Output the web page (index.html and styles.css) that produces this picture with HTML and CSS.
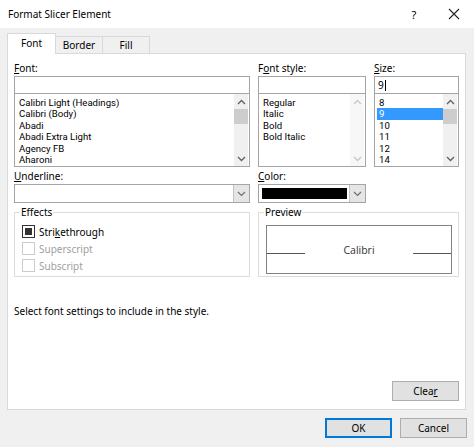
FILE: index.html
```html
<!DOCTYPE html>
<html lang="en">
<head>
  <meta charset="UTF-8">
  <title>Format Slicer Element</title>
  <link rel="stylesheet" href="styles.css">
</head>
<body>
  <div class="dialog">

    <div class="titlebar">
      <span class="title">Format Slicer Element</span>
      <span class="help">?</span>
      <span class="close">
        <svg width="12" height="12" viewBox="0 0 12 12"><path d="M1 1L11 11M11 1L1 11" stroke="#222" stroke-width="1.1" fill="none"/></svg>
      </span>
    </div>

    <div class="tabs">
      <div class="tab active">Font</div>
      <div class="tab">Border</div>
      <div class="tab">Fill</div>
    </div>

    <div class="panel">
      <div class="pickers">
        <!-- Font name -->
        <div class="field">
          <div class="label"><u>F</u>ont:</div>
          <div class="textbox"></div>
          <div class="listbox">
            <ul class="items">
              <li>Calibri Light (Headings)</li>
              <li>Calibri (Body)</li>
              <li>Abadi</li>
              <li>Abadi Extra Light</li>
              <li>Agency FB</li>
              <li>Aharoni</li>
            </ul>
            <div class="scrollbar">
              <svg class="arrow" width="9" height="6" viewBox="0 0 9 6"><polyline points="1,5 4.5,1.5 8,5" stroke="#606060" stroke-width="1.3" fill="none"/></svg>
              <div class="track"><div class="thumb"></div></div>
              <svg class="arrow" width="9" height="6" viewBox="0 0 9 6"><polyline points="1,1 4.5,4.5 8,1" stroke="#606060" stroke-width="1.3" fill="none"/></svg>
            </div>
          </div>
        </div>

        <!-- Font style -->
        <div class="field">
          <div class="label">F<u>o</u>nt style:</div>
          <div class="textbox"></div>
          <div class="listbox">
            <ul class="items">
              <li>Regular</li>
              <li>Italic</li>
              <li>Bold</li>
              <li>Bold Italic</li>
            </ul>
            <div class="scrollbar off">
              <svg class="arrow" width="9" height="6" viewBox="0 0 9 6"><polyline points="1,5 4.5,1.5 8,5" stroke="#c8c8c8" stroke-width="1.3" fill="none"/></svg>
              <div class="track"></div>
              <svg class="arrow" width="9" height="6" viewBox="0 0 9 6"><polyline points="1,1 4.5,4.5 8,1" stroke="#c8c8c8" stroke-width="1.3" fill="none"/></svg>
            </div>
          </div>
        </div>

        <!-- Size -->
        <div class="field">
          <div class="label"><u>S</u>ize:</div>
          <div class="textbox"><span class="typed">9</span><span class="caret"></span></div>
          <div class="listbox">
            <ul class="items">
              <li>8</li>
              <li class="selected">9</li>
              <li>10</li>
              <li>11</li>
              <li>12</li>
              <li>14</li>
            </ul>
            <div class="scrollbar">
              <svg class="arrow" width="9" height="6" viewBox="0 0 9 6"><polyline points="1,5 4.5,1.5 8,5" stroke="#606060" stroke-width="1.3" fill="none"/></svg>
              <div class="track"><div class="thumb"></div></div>
              <svg class="arrow" width="9" height="6" viewBox="0 0 9 6"><polyline points="1,1 4.5,4.5 8,1" stroke="#606060" stroke-width="1.3" fill="none"/></svg>
            </div>
          </div>
        </div>

        <!-- Underline -->
        <div class="field">
          <div class="label spaced"><u>U</u>nderline:</div>
          <div class="combo">
            <div class="combo-value"></div>
            <div class="drop">
              <svg width="9" height="6" viewBox="0 0 9 6"><polyline points="1,1 4.5,4.5 8,1" stroke="#707070" stroke-width="1.2" fill="none"/></svg>
            </div>
          </div>
        </div>

        <!-- Color -->
        <div class="field">
          <div class="label spaced"><u>C</u>olor:</div>
          <div class="combo">
            <div class="combo-value"><div class="swatch"></div></div>
            <div class="drop">
              <svg width="9" height="6" viewBox="0 0 9 6"><polyline points="1,1 4.5,4.5 8,1" stroke="#707070" stroke-width="1.2" fill="none"/></svg>
            </div>
          </div>
        </div>
        <div></div>

        <!-- Effects -->
        <div class="group effects">
          <div class="group-title">Effects</div>
          <div class="check">
            <span class="box mixed"></span>
            <span>Stri<u>k</u>ethrough</span>
          </div>
          <div class="check disabled">
            <span class="box"></span>
            <span>Superscript</span>
          </div>
          <div class="check disabled">
            <span class="box"></span>
            <span>Subscript</span>
          </div>
        </div>

        <!-- Preview -->
        <div class="group preview">
          <div class="group-title">Preview</div>
          <div class="sample">
            <span class="rule"></span>
            <span class="sample-text">Calibri</span>
            <span class="rule"></span>
          </div>
        </div>
      </div>

      <p class="hint">Select font settings to include in the style.</p>

      <div class="clear-row">
        <button class="btn">Clea<u>r</u></button>
      </div>
    </div>

    <div class="actions">
      <button class="btn default">OK</button>
      <button class="btn">Cancel</button>
    </div>

  </div>
</body>
</html>
```

FILE: styles.css
```css
body {
  margin: 0;
  background-color: #f0f0f0;
  font-family: "Noto Sans", sans-serif;
  font-size: 10px;
  color: #000;
}

.dialog {
  width: 474px;
  height: 447px;
  overflow: hidden;
}

/* title bar */
.titlebar {
  height: 28px;
  background-color: #fff;
  display: flex;
  align-items: center;
  padding-left: 8px;
}

.title {
  font-size: 10px;
  flex: 1;
}

.help {
  font-size: 11px;
  width: 40px;
  text-align: center;
}

.close {
  width: 40px;
  display: flex;
  justify-content: center;
}

/* tabs */
.tabs {
  display: flex;
  align-items: flex-end;
  margin: 6px 0 0 7px;
  height: 19px;
  position: relative;
  z-index: 1;
}

.tab {
  width: 46px;
  height: 16px;
  line-height: 16px;
  border: 1px solid #d9d9d9;
  border-bottom: none;
  background-color: #f0f0f0;
  margin-left: -1px;
  text-align: center;
}

.tab.active {
  width: 47px;
  height: 20px;
  line-height: 18px;
  margin-left: 0;
  margin-bottom: -1px;
  background-color: #fff;
}

/* main panel */
.panel {
  margin-left: 7px;
  width: 459px;
  height: 357px;
  border: 1px solid #d9d9d9;
  background-color: #fff;
  display: flex;
  flex-direction: column;
  padding: 7px 6px 0 6px;
  box-sizing: border-box;
}

.pickers {
  display: grid;
  grid-template-columns: 236px 108px 85px;
  column-gap: 8px;
}

.field {
  display: flex;
  flex-direction: column;
}

.label {
  height: 15px;
  line-height: 15px;
}

.label.spaced {
  margin-top: 2px;
}

.textbox {
  height: 18px;
  border: 1px solid #a5a5a5;
  box-sizing: border-box;
  display: flex;
  align-items: center;
  padding-left: 3px;
}

.caret {
  width: 1px;
  height: 11px;
  background-color: #000;
  margin-left: 1px;
}

.listbox {
  height: 73px;
  border: 1px solid #a5a5a5;
  border-top: none;
  box-sizing: border-box;
  display: flex;
}

.items {
  list-style: none;
  margin: 0;
  padding: 3px 0 0 2px;
  flex: 1;
  min-width: 0;
  font-family: Roboto, "Noto Sans", sans-serif;
  font-size: 9.6px;
}

.items li {
  height: 11.4px;
  line-height: 11.4px;
  padding-left: 2px;
  white-space: nowrap;
}

.items li.selected {
  background-color: #3399ff;
  color: #fff;
}

.scrollbar {
  width: 14px;
  background-color: #f0f0f0;
  display: flex;
  flex-direction: column;
  align-items: center;
  padding: 5px 0 4px 0;
  margin-right: 1px;
}

.scrollbar.off {
  background-color: #f7f7f7;
}

.track {
  flex: 1;
  width: 100%;
  padding-top: 4px;
}

.thumb {
  height: 15px;
  background-color: #cdcdcd;
}

/* combos */
.combo {
  height: 19px;
  border: 1px solid #a5a5a5;
  box-sizing: border-box;
  display: flex;
}

.combo-value {
  flex: 1;
  padding: 3px 2px 3px 3px;
}

.swatch {
  height: 11px;
  background-color: #000;
}

.drop {
  width: 15px;
  background-color: #e5e5e5;
  border-left: 1px solid #c4c4c4;
  display: flex;
  align-items: center;
  justify-content: center;
}

/* group boxes */
.group {
  margin-top: 9px;
  height: 65px;
  border: 1px solid #dcdcdc;
  box-sizing: border-box;
  position: relative;
}

.group-title {
  position: absolute;
  top: -8px;
  left: 5px;
  background-color: #fff;
  padding: 0 1px;
  line-height: 15px;
}

.effects {
  padding: 10px 0 0 7px;
}

.preview {
  grid-column: 2 / 4;
  width: 201px;
  padding: 12px 6px 0 7px;
}

.check {
  display: flex;
  align-items: center;
  height: 17px;
  gap: 4px;
}

.box {
  width: 13px;
  height: 13px;
  box-sizing: border-box;
  border: 1px solid #333;
  display: flex;
  align-items: center;
  justify-content: center;
}

.box.mixed::after {
  content: "";
  width: 7px;
  height: 7px;
  background-color: #333;
}

.check.disabled {
  color: #a0a0a0;
}

.check.disabled .box {
  border-color: #cccccc;
}

.sample {
  height: 49px;
  border: 1px solid #828282;
  box-sizing: border-box;
  display: flex;
  align-items: center;
}

.rule {
  width: 38px;
  height: 1px;
  background-color: #555;
  margin-top: 8px;
}

.sample-text {
  flex: 1;
  text-align: center;
  font-family: "Open Sans", sans-serif;
  font-size: 10.5px;
  color: #333;
}

.hint {
  margin: 27px 0 0 0;
  line-height: 15px;
}

.clear-row {
  margin-top: auto;
  display: flex;
  justify-content: flex-end;
  padding: 0 0 8px 0;
}

/* buttons */
.btn {
  font-family: "Noto Sans", sans-serif;
  font-size: 10px;
  width: 67px;
  height: 20px;
  padding: 0;
  background-color: #e1e1e1;
  border: 1px solid #adadad;
  color: #000;
}

.actions {
  display: flex;
  justify-content: flex-end;
  gap: 8px;
  margin-top: 8px;
  padding-right: 7px;
}

.btn.default {
  border: 2px solid #0078d7;
}
```
